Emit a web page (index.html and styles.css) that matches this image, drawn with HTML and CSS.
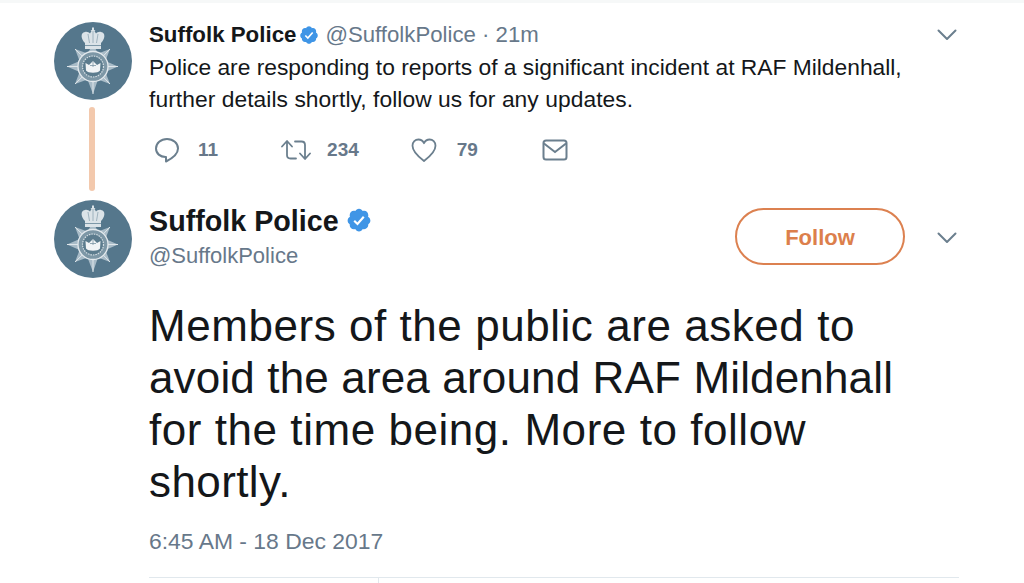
FILE: index.html
```html
<!DOCTYPE html>
<html lang="en">
<head>
<meta charset="utf-8">
<title>Suffolk Police</title>
<link rel="stylesheet" href="styles.css">
</head>
<body>
<svg class="defs" width="0" height="0" aria-hidden="true">
  <defs>
    <symbol id="crest" viewBox="0 0 78 78">
      <circle cx="39" cy="39" r="39" fill="#55778c"/>
      <path d="M39 22L44 31.600 56 27 51.400 39.100 64 44.500 51.400 49.900 56 62 44 57.400 39 72 33.500 57.400 21 62 25.600 49.900 13 44.500 25.600 39.100 21 27 33.500 31.600z" fill="#a9bcc8"/>
      <path d="M39 44.500L56 27M39 44.500L64 44.500M39 44.500L56 62M39 44.500L39 72M39 44.500L21 62M39 44.500L13 44.500M39 44.500L21 27" stroke="#dfe6ea" stroke-width="1"/>
      <circle cx="39" cy="44.500" r="15" fill="#7d97a6" stroke="#e4eaee" stroke-width="1.300"/>
      <circle cx="39" cy="44.500" r="10.500" fill="#5c7c8e" stroke="#d5dfe4" stroke-width="1.200" stroke-dasharray="1.500 1"/>
      <path d="M31.500 41l3.500 2 4-4 4 4 3.500-2-.5 7.500c-2 3-12 3-14 0z" fill="#f1f4f6"/>
      <path d="M36 43.500h6M39 39v6" stroke="#7d97a6" stroke-width=".8"/>
      <path d="M31 21C27 17 26 11 31 10c2-.5 4 .5 5 1.500L37.500 9 36.500 8H38V5.500h2V8h1.500l-1 1L42 11.500c1-1 3-2 5-1.500 5 1 4 7 0 11z" fill="#dbe3e8"/>
      <path d="M39 9v12M34 12l1.500 9M44 12l-1.500 9" stroke="#8fa6b4" stroke-width=".8"/>
      <rect x="31" y="21" width="16" height="6" fill="#dbe3e8"/>
      <path d="M31 23.500h16" stroke="#7d98a8" stroke-width="1"/>
    </symbol>
    <symbol id="verified" viewBox="0 0 24 24">
      <path d="M22.500 12.500c0-1.580-.875-2.950-2.148-3.600.154-.435.238-.905.238-1.400 0-2.210-1.710-3.998-3.818-3.998-.470 0-.920.084-1.336.250C14.818 2.415 13.510 1.500 12 1.500s-2.816.917-3.437 2.250c-.415-.165-.866-.250-1.336-.250-2.110 0-3.818 1.790-3.818 4 0 .494.083.964.237 1.400-1.272.650-2.147 2.018-2.147 3.600 0 1.495.782 2.798 1.942 3.486-.020.170-.032.340-.032.514 0 2.210 1.708 4 3.818 4 .470 0 .920-.086 1.335-.250.620 1.334 1.926 2.250 3.437 2.250 1.512 0 2.818-.916 3.437-2.250.415.163.865.248 1.336.248 2.110 0 3.818-1.790 3.818-4 0-.174-.012-.344-.033-.513 1.158-.687 1.943-1.990 1.943-3.484z" fill="#3f95e6"/>
      <path d="M7.600 12.600l3 3 5.800-6.600" fill="none" stroke="#fff" stroke-width="2"/>
    </symbol>
    <symbol id="chevron" viewBox="0 0 20 12">
      <path d="M1.500 1.500L10 10l8.500-8.500" fill="none" stroke="#6b7f8e" stroke-width="2" stroke-linecap="round" stroke-linejoin="round"/>
    </symbol>
  </defs>
</svg>

<main class="page">
  <article class="thread-item">
    <div class="rail">
      <svg class="avatar"><use href="#crest"/></svg>
      <span class="thread-line"></span>
    </div>
    <div class="thread-body">
      <header class="meta">
        <strong class="meta-name">Suffolk Police</strong>
        <svg class="badge-small"><use href="#verified"/></svg>
        <span class="meta-handle">@SuffolkPolice · 21m</span>
        <svg class="chevron chevron-top"><use href="#chevron"/></svg>
      </header>
      <p class="reply-text">Police are responding to reports of a significant incident at RAF Mildenhall,<br><span class="reply-second">further details shortly, follow us for any updates.</span></p>
      <div class="actions">
        <span class="action action-reply">
          <svg class="icon" viewBox="0 0 26 26"><path d="M13 2C6.800 2 2 6.300 2 11.500c0 5 4.200 8.500 9.500 8.500h.5v4.500c4-2 12-6.500 12-13C24 6.300 19.200 2 13 2z" fill="none" stroke="#6b7f8e" stroke-width="2" stroke-linejoin="round"/></svg>
          <span class="count">11</span>
        </span>
        <span class="action action-retweet">
          <svg class="icon icon-rt" viewBox="0 0 30 24"><path d="M1 8.500l5-5.500 5 5.500M6 3.500V17c0 2 1.500 3.500 3.500 3.500H15M14 3.500h6.500c2 0 3.500 1.500 3.500 3.500v13.500M19 15.500l5 5.500 5-5.500" fill="none" stroke="#6b7f8e" stroke-width="1.800" stroke-linecap="round" stroke-linejoin="round"/></svg>
          <span class="count">234</span>
        </span>
        <span class="action action-like">
          <svg class="icon" viewBox="0 0 26 26"><path d="M13 24C7 19.500 1.500 14.500 1.500 8.800 1.500 5 4.300 2.500 7.400 2.500c2.500 0 4.400 1.300 5.600 3.700 1.200-2.400 3.100-3.700 5.600-3.700 3.100 0 5.900 2.500 5.900 6.300C24.500 14.500 19 19.500 13 24z" fill="none" stroke="#6b7f8e" stroke-width="1.800" stroke-linejoin="round"/></svg>
          <span class="count">79</span>
        </span>
        <svg class="icon icon-mail" viewBox="0 0 26 22"><rect x="1.500" y="1.500" width="23" height="19" rx="2.500" fill="none" stroke="#6b7f8e" stroke-width="2"/><path d="M2 4.500l11 8.500 11-8.500" fill="none" stroke="#6b7f8e" stroke-width="2"/></svg>
      </div>
    </div>
  </article>

  <article class="main-tweet">
    <header class="author">
      <svg class="avatar"><use href="#crest"/></svg>
      <div class="author-names">
        <div class="author-line">
          <strong class="author-name">Suffolk Police</strong>
          <svg class="badge-large"><use href="#verified"/></svg>
        </div>
        <span class="author-handle">@SuffolkPolice</span>
      </div>
      <button class="follow" type="button">Follow</button>
      <svg class="chevron"><use href="#chevron"/></svg>
    </header>
    <p class="tweet-text"><span class="line-wide">Members of the public are asked to</span><br>avoid the area around RAF Mildenhall<br><span class="line-wide">for the time being. More to follow</span><br><span class="line-end">shortly.</span></p>
    <time class="timestamp">6:45 AM - 18 Dec 2017</time>
    <div class="stats-rule"><span class="stats-cell"></span></div>
  </article>
</main>
</body>
</html>
```

FILE: styles.css
```css
* { box-sizing: border-box; }
html, body { margin: 0; height: 100%; background: #fff; overflow: hidden; }
body { font-family: "Liberation Sans", Arial, sans-serif; color: #14171a; }
.defs { position: absolute; }
.page { width: 1024px; height: 583px; padding-top: 19px; padding-left: 54px; border-top: 3px solid #f6f8f8; }

.thread-item { display: flex; height: 178px; }
.rail { width: 95px; flex: none; display: flex; flex-direction: column; align-items: flex-start; }
.avatar { width: 78px; height: 78px; flex: none; display: block; filter: blur(.4px); }
.thread-line { width: 6px; height: 84px; margin: 7px 0 0 35px; border-radius: 3px; background: #f3c9ad; }
.thread-body { width: 808px; }

.meta { display: flex; align-items: center; height: 26px; }
.meta-name { font-size: 22.300px; font-weight: 700; }
.badge-small { width: 20px; height: 20px; margin-left: 3px; }
.meta-handle { margin-left: 6px; font-size: 22.200px; color: #67788a; }
.chevron { width: 20px; height: 12px; flex: none; }
.chevron-top { margin-left: auto; }

.reply-text { margin: 3px 0 0; font-size: 22.800px; line-height: 32px; color: #14171a; }
.reply-second { letter-spacing: .06px; }

.actions { display: flex; align-items: center; margin-top: 20px; height: 30px; padding-left: 5px; }
.action { display: flex; align-items: center; }
.icon { width: 26px; height: 26px; flex: none; }
.icon-rt { width: 30px; height: 24px; }
.icon-mail { width: 26px; height: 22px; margin-left: 64px; }
.count { font-size: 19px; font-weight: 700; color: #67788a; }
.action-reply .count { margin-left: 18px; }
.action-retweet { margin-left: 63px; }
.action-retweet .count { margin-left: 16px; }
.action-like { margin-left: 52px; }
.action-like .count { margin-left: 20px; }

.author { display: flex; align-items: flex-start; height: 78px; }
.author-names { width: 586px; margin-left: 17px; }
.author-line { display: flex; align-items: center; height: 42px; }
.author-name { font-size: 28.700px; font-weight: 700; }
.badge-large { width: 26px; height: 26px; margin-left: 7px; margin-top: -3px; }
.author-handle { display: block; margin-top: 1px; font-size: 22px; color: #67788a; }
.follow { width: 170px; height: 57px; margin-top: 8px; padding-top: 3px; border: 2px solid #dc8150; border-radius: 29px; background: #fff; color: #dc7f4c; font: 700 22px "Liberation Sans", Arial, sans-serif; }
.author > .chevron { margin: 32px 0 0 32px; }

.tweet-text { margin: 22px 0 0 95px; font-size: 44px; letter-spacing: .15px; line-height: 52px; color: #14171a; }
.line-wide { letter-spacing: .55px; }
.line-end { letter-spacing: .4px; }
.timestamp { display: block; margin: 20px 0 0 95px; font-size: 22.900px; color: #67788a; }
.stats-rule { margin: 22px 0 0 95px; width: 810px; height: 8px; border-top: 1px solid #e1e8ed; }
.stats-cell { display: block; width: 230px; height: 7px; border-right: 1px solid #e1e8ed; }
```
